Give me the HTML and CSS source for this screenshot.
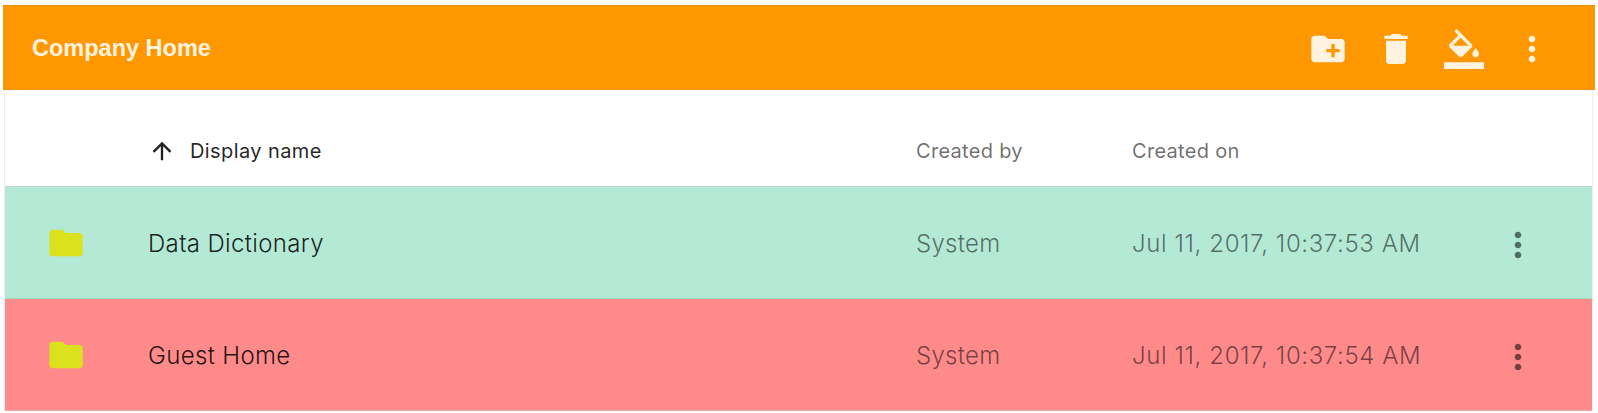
FILE: index.html
```html
<!DOCTYPE html>
<html lang="en">
<head>
<meta charset="utf-8">
<title>Company Home</title>
<link rel="stylesheet" href="styles.css">
</head>
<body>
<main class="panel">
  <header class="toolbar">
    <h1 class="title">Company Home</h1>
    <div class="actions">
      <svg class="tool" viewBox="0 0 24 24"><path d="M20 6h-8l-2-2H4c-1.11 0-1.99.89-1.99 2L2 18c0 1.11.89 2 2 2h16c1.11 0 2-.89 2-2V8c0-1.11-.89-2-2-2zm-1 8h-3v3h-2v-3h-3v-2h3V9h2v3h3v2z"/></svg>
      <svg class="tool" viewBox="0 0 24 24"><path d="M6 19c0 1.1.9 2 2 2h8c1.1 0 2-.9 2-2V7H6v12zM19 4h-3.5l-1-1h-5l-1 1H5v2h14V4z"/></svg>
      <svg class="tool" viewBox="0 0 24 24"><path d="M16.56 8.94L7.62 0 6.21 1.41l2.38 2.38-5.15 5.15c-.59.59-.59 1.54 0 2.12l5.5 5.5c.29.29.68.44 1.06.44s.77-.15 1.06-.44l5.5-5.5c.59-.58.59-1.53 0-2.12zM5.21 10L10 5.21 14.79 10H5.21zM19 11.5s-2 2.17-2 3.5c0 1.1.9 2 2 2s2-.9 2-2c0-1.33-2-3.5-2-3.5z"/><path d="M0 20h24v4H0z"/></svg>
      <svg class="tool" viewBox="0 0 24 24"><path d="M12 8c1.1 0 2-.9 2-2s-.9-2-2-2-2 .9-2 2 .9 2 2 2zm0 2c-1.1 0-2 .9-2 2s.9 2 2 2 2-.9 2-2-.9-2-2-2zm0 6c-1.1 0-2 .9-2 2s.9 2 2 2 2-.9 2-2-.9-2-2-2z"/></svg>
    </div>
  </header>
  <section class="table">
    <div class="row head">
      <div class="cell-icon"></div>
      <div class="cell-name sort">
        <svg class="arrow" viewBox="0 0 24 24"><path d="M4 12l1.41 1.41L11 7.83V20h2V7.83l5.58 5.59L20 12l-8-8-8 8z"/></svg>
        <span>Display name</span>
      </div>
      <div class="cell-by">Created by</div>
      <div class="cell-on">Created on</div>
      <div class="cell-more"></div>
    </div>
    <div class="row item mint">
      <div class="cell-icon"><svg class="folder" viewBox="0 0 24 24"><path d="M10 4H4c-1.1 0-1.99.9-1.99 2L2 18c0 1.1.9 2 2 2h16c1.1 0 2-.9 2-2V8c0-1.1-.9-2-2-2h-8l-2-2z"/></svg></div>
      <div class="cell-name">Data Dictionary</div>
      <div class="cell-by">System</div>
      <div class="cell-on">Jul 11, 2017, 10:37:53 AM</div>
      <div class="cell-more"><svg class="kebab" viewBox="0 0 24 24"><path d="M12 8c1.1 0 2-.9 2-2s-.9-2-2-2-2 .9-2 2 .9 2 2 2zm0 2c-1.1 0-2 .9-2 2s.9 2 2 2 2-.9 2-2-.9-2-2-2zm0 6c-1.1 0-2 .9-2 2s.9 2 2 2 2-.9 2-2-.9-2-2-2z"/></svg></div>
    </div>
    <div class="row item coral">
      <div class="cell-icon"><svg class="folder" viewBox="0 0 24 24"><path d="M10 4H4c-1.1 0-1.99.9-1.99 2L2 18c0 1.1.9 2 2 2h16c1.1 0 2-.9 2-2V8c0-1.1-.9-2-2-2h-8l-2-2z"/></svg></div>
      <div class="cell-name">Guest Home</div>
      <div class="cell-by">System</div>
      <div class="cell-on">Jul 11, 2017, 10:37:54 AM</div>
      <div class="cell-more"><svg class="kebab" viewBox="0 0 24 24"><path d="M12 8c1.1 0 2-.9 2-2s-.9-2-2-2-2 .9-2 2 .9 2 2 2zm0 2c-1.1 0-2 .9-2 2s.9 2 2 2 2-.9 2-2-.9-2-2-2zm0 6c-1.1 0-2 .9-2 2s.9 2 2 2 2-.9 2-2-.9-2-2-2z"/></svg></div>
    </div>
  </section>
</main>
</body>
</html>
```
FILE: styles.css
```css
* { box-sizing: border-box; }
html, body { margin: 0; padding: 0; height: 100%; overflow: hidden; background: #fff; }
body { padding: 5px 3px 0 3px; font-family: Inter, Lato, sans-serif; }
.panel { display: flex; flex-direction: column; }
.toolbar {
  height: 85px; display: flex; align-items: center; justify-content: space-between;
  background: #ff9800; border-top: 1px solid #ea8f0a; border-bottom: 1px solid #f2930a;
  padding: 3px 43px 0 29px;
}
.title { margin: 0 0 2px; font: bold 23.5px "Liberation Sans", Arial, sans-serif; color: #fff3e0; }
.actions { display: flex; align-items: center; gap: 28px; }
.tool { width: 40px; height: 40px; fill: #fff3e0; display: block; }
.table { margin: 0 2px 0 1px; border-left: 1px solid #eee; border-right: 1px solid #eee; }
.row { display: grid; grid-template-columns: 143px 768px 216px 1fr 148px; align-items: center; }
.head { height: 97px; padding-top: 26px; font-size: 20px; letter-spacing: .3px; color: rgba(0,0,0,.58); border-bottom: 1px solid #b8d8cc; }
.sort { display: flex; align-items: center; gap: 14px; color: rgba(0,0,0,.87); letter-spacing: .4px; }
.arrow { width: 28px; height: 28px; fill: rgba(0,0,0,.87); }
.item { height: 112px; font-size: 24px; font-weight: 300; color: rgba(0,0,0,.54); }
.item .cell-name { color: rgba(0,0,0,.87); letter-spacing: .35px; padding-top: 2px; }
.item .cell-by { letter-spacing: .3px; padding-top: 2px; }
.item .cell-on { letter-spacing: .6px; padding-top: 2px; }
.mint { background: #b4e9d6; border-bottom: 1px solid #a0d9c6; }
.coral { background: #ff8a8a; border-bottom: 1px solid #eaa; }
.cell-icon { display: flex; padding-left: 41px; }
.folder { width: 40px; height: 40px; fill: #dce11e; display: block; }
.cell-more { display: flex; justify-content: center; padding-top: 4px; }
.kebab { width: 40px; height: 40px; fill: rgba(0,0,0,.54); display: block; }
```
